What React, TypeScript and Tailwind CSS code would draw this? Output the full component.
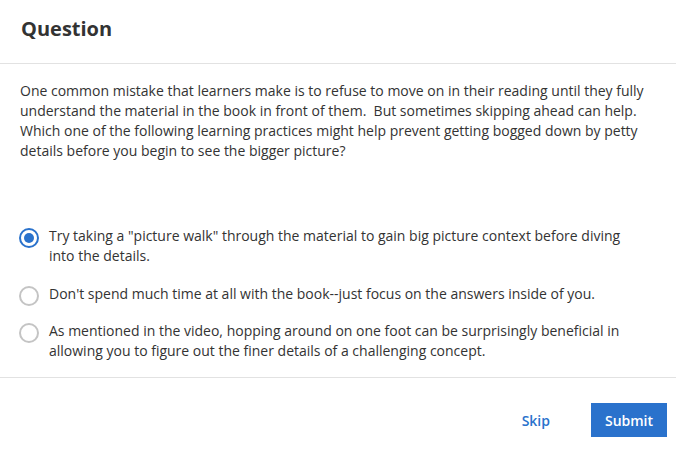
import React, { useState } from "react";

const options = [
  'Try taking a "picture walk" through the material to gain big picture context before diving into the details.',
  "Don't spend much time at all with the book--just focus on the answers inside of you.",
  "As mentioned in the video, hopping around on one foot can be surprisingly beneficial in allowing you to figure out the finer details of a challenging concept.",
];

const gaps = ["mb-[18px]", "mb-[15px]", "mb-0"];

export default function App() {
  const [sel, setSel] = useState(0);
  return (
    <div
      className="w-[676px] h-[451px] bg-white text-[#333333] flex flex-col"
      style={{ fontFamily: '"Open Sans", sans-serif' }}
    >
      <div className="h-[64px] border-b border-[#e2e2e2] flex items-center px-[21px]">
        <h1 className="text-[20px] font-bold leading-none text-[#333333] -mt-[5px]">Question</h1>
      </div>
      <div className="px-[20px] pt-[17px]">
        <p className="text-[14px] leading-[20px] whitespace-pre-wrap">
          {"One common mistake that learners make is to refuse to move on in their reading until they fully understand the material in the book in front of them.  But sometimes skipping ahead can help. Which one of the following learning practices might help prevent getting bogged down by petty details before you begin to see the bigger picture?"}
        </p>
      </div>
      <div className="px-[19px] pt-[65px] flex flex-col h-[216px]">
        {options.map((o, i) => (
          <label
            key={i}
            className={"flex items-start gap-[10px] cursor-pointer " + gaps[i]}
            onClick={() => setSel(i)}
          >
            <span
              className={
                "mt-[2px] w-[20px] h-[20px] shrink-0 rounded-full border-2 flex items-center justify-center " +
                (sel === i ? "border-[#2a72cc]" : "border-[#c4c4c4]")
              }
            >
              {sel === i && <span className="w-[10px] h-[10px] rounded-full bg-[#2a72cc]" />}
            </span>
            <span className="text-[14px] leading-[20px] pr-[30px]">{o}</span>
          </label>
        ))}
      </div>
      <div className="border-t border-[#e2e2e2] flex-1 flex items-start justify-end pr-[9px] pt-[25px]">
        <button className="h-[34px] px-[16px] text-[14px] font-semibold text-[#2a72cc] mr-[25px]">Skip</button>
        <button className="h-[34px] w-[76px] bg-[#2a72cc] text-white text-[14px] font-semibold">Submit</button>
      </div>
    </div>
  );
}
